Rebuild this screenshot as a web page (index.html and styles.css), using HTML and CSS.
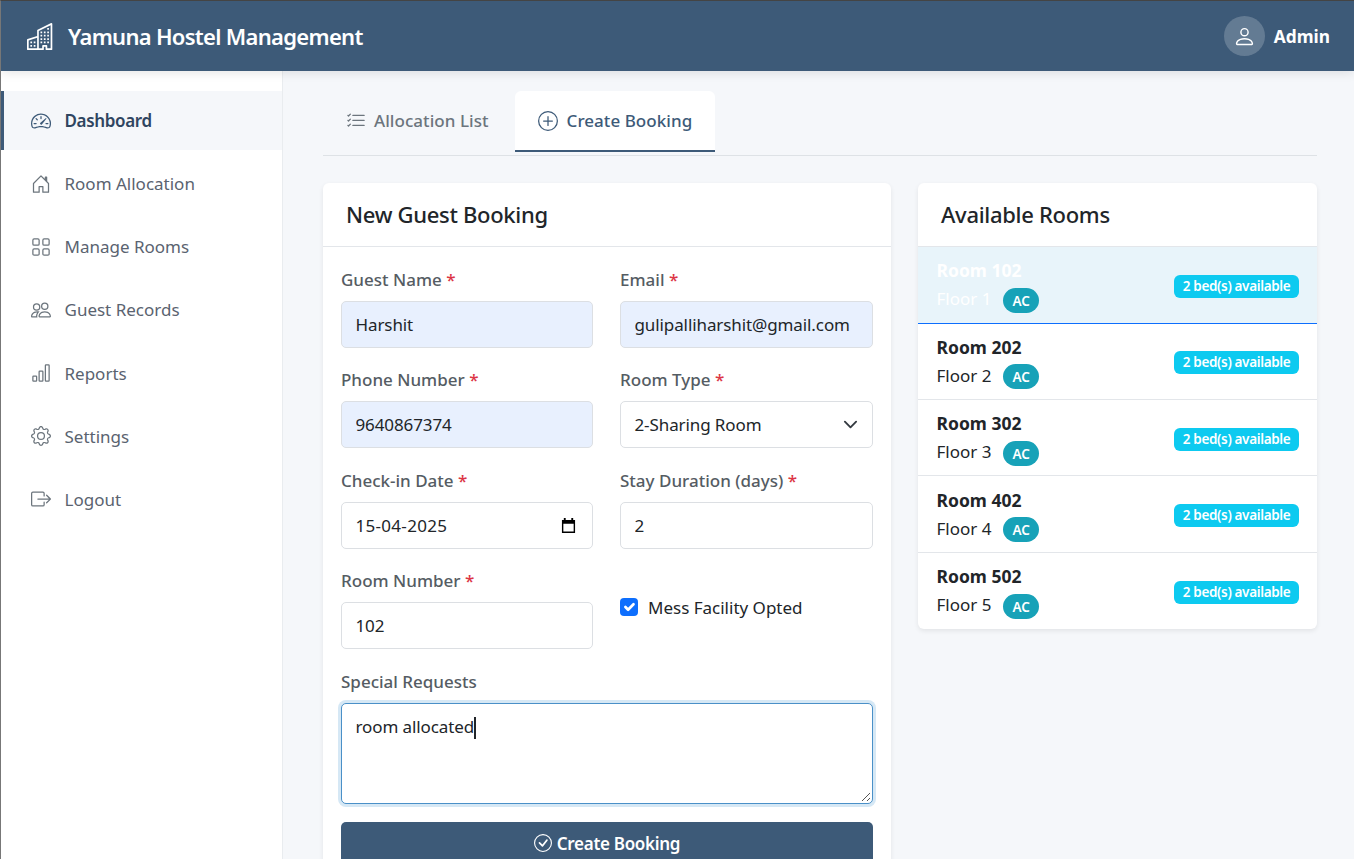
FILE: index.html
```html
<html>
<head>
    <title>Yamuna Hostel Management</title>
    <link rel="stylesheet" href="styles.css">
</head>
<body>
    <header class="topbar">
        <div class="brand">
            <svg class="brand-icon" viewBox="0 0 16 16" fill="currentColor"><path d="M14.763.075A.5.5 0 0 1 15 .5v15a.5.5 0 0 1-.5.5h-3a.5.5 0 0 1-.5-.5V14h-1v1.5a.5.5 0 0 1-.5.5h-9a.5.5 0 0 1-.5-.5V10a.5.5 0 0 1 .342-.474L6 7.64V4.5a.5.5 0 0 1 .276-.447l8-4a.5.5 0 0 1 .487.022zM6 8.694 1 10.36V15h5V8.694zM7 15h2v-1.5a.5.5 0 0 1 .5-.5h2a.5.5 0 0 1 .5.5V15h2V1.309l-7 3.5V15z"/><path d="M2 11h1v1H2v-1zm2 0h1v1H4v-1zm-2 2h1v1H2v-1zm2 0h1v1H4v-1zm4-4h1v1H8V9zm2 0h1v1h-1V9zm-2 2h1v1H8v-1zm2 0h1v1h-1v-1zm2-2h1v1h-1V9zm0 2h1v1h-1v-1zM8 7h1v1H8V7zm2 0h1v1h-1V7zm2 0h1v1h-1V7zM8 5h1v1H8V5zm2 0h1v1h-1V5zm2 0h1v1h-1V5zm0-2h1v1h-1V3z"/></svg>
            <span>Yamuna Hostel Management</span>
        </div>
        <div class="user">
            <div class="avatar">
                <svg viewBox="0 0 16 16" fill="currentColor"><path d="M8 8a3 3 0 1 0 0-6 3 3 0 0 0 0 6zm2-3a2 2 0 1 1-4 0 2 2 0 0 1 4 0zm4 8c0 1-1 1-1 1H3s-1 0-1-1 1-4 6-4 6 3 6 4zm-1-.004c-.001-.246-.154-.986-.832-1.664C11.516 10.68 10.289 10 8 10c-2.29 0-3.516.68-4.168 1.332-.678.678-.83 1.418-.832 1.664h10z"/></svg>
            </div>
            <span>Admin</span>
        </div>
    </header>

    <div class="layout">
        <nav class="sidebar">
            <a class="nav-item active">
                <svg viewBox="0 0 16 16" fill="currentColor"><path d="M8 4a.5.5 0 0 1 .5.5V6a.5.5 0 0 1-1 0V4.5A.5.5 0 0 1 8 4zM3.732 5.732a.5.5 0 0 1 .707 0l.915.914a.5.5 0 1 1-.708.708l-.914-.915a.5.5 0 0 1 0-.707zM2 10a.5.5 0 0 1 .5-.5h1.586a.5.5 0 0 1 0 1H2.5A.5.5 0 0 1 2 10zm9.5 0a.5.5 0 0 1 .5-.5h1.5a.5.5 0 0 1 0 1H12a.5.5 0 0 1-.5-.5zm.754-4.246a.389.389 0 0 0-.527-.02L7.547 9.31a.91.91 0 1 0 1.302 1.258l3.434-4.297a.389.389 0 0 0-.029-.518z"/><path fill-rule="evenodd" d="M0 10a8 8 0 1 1 15.547 2.661c-.442 1.253-1.845 1.602-2.932 1.25C11.309 13.488 9.475 13 8 13c-1.474 0-3.31.488-4.615.911-1.087.352-2.49.003-2.932-1.25A7.988 7.988 0 0 1 0 10zm8-7a7 7 0 0 0-6.603 9.329c.203.575.923.876 1.68.63C4.397 12.533 6.358 12 8 12s3.604.532 4.923.96c.757.245 1.477-.056 1.68-.631A7 7 0 0 0 8 3z"/></svg>
                <span>Dashboard</span>
            </a>
            <a class="nav-item">
                <svg viewBox="0 0 16 16" fill="currentColor"><path d="M8.354 1.146a.5.5 0 0 0-.708 0l-6 6A.5.5 0 0 0 1.5 7.5v7a.5.5 0 0 0 .5.5h4.5a.5.5 0 0 0 .5-.5v-4h2v4a.5.5 0 0 0 .5.5H14a.5.5 0 0 0 .5-.5v-7a.5.5 0 0 0-.146-.354L13 5.793V2.5a.5.5 0 0 0-.5-.5h-1a.5.5 0 0 0-.5.5v1.293L8.354 1.146zM2.5 14V7.707l5.5-5.5 5.5 5.5V14H10v-4a.5.5 0 0 0-.5-.5h-3a.5.5 0 0 0-.5.5v4H2.5z"/></svg>
                <span>Room Allocation</span>
            </a>
            <a class="nav-item">
                <svg viewBox="0 0 16 16" fill="currentColor"><path d="M1 2.5A1.5 1.5 0 0 1 2.5 1h3A1.5 1.5 0 0 1 7 2.5v3A1.5 1.5 0 0 1 5.5 7h-3A1.5 1.5 0 0 1 1 5.5v-3zM2.5 2a.5.5 0 0 0-.5.5v3a.5.5 0 0 0 .5.5h3a.5.5 0 0 0 .5-.5v-3a.5.5 0 0 0-.5-.5h-3zm6.5.5A1.5 1.5 0 0 1 10.5 1h3A1.5 1.5 0 0 1 15 2.5v3A1.5 1.5 0 0 1 13.5 7h-3A1.5 1.5 0 0 1 9 5.5v-3zm1.5-.5a.5.5 0 0 0-.5.5v3a.5.5 0 0 0 .5.5h3a.5.5 0 0 0 .5-.5v-3a.5.5 0 0 0-.5-.5h-3zM1 10.5A1.5 1.5 0 0 1 2.5 9h3A1.5 1.5 0 0 1 7 10.5v3A1.5 1.5 0 0 1 5.5 15h-3A1.5 1.5 0 0 1 1 13.5v-3zm1.5-.5a.5.5 0 0 0-.5.5v3a.5.5 0 0 0 .5.5h3a.5.5 0 0 0 .5-.5v-3a.5.5 0 0 0-.5-.5h-3zm6.5.5A1.5 1.5 0 0 1 10.5 9h3a1.5 1.5 0 0 1 1.5 1.5v3a1.5 1.5 0 0 1-1.5 1.5h-3A1.5 1.5 0 0 1 9 13.5v-3zm1.5-.5a.5.5 0 0 0-.5.5v3a.5.5 0 0 0 .5.5h3a.5.5 0 0 0 .5-.5v-3a.5.5 0 0 0-.5-.5h-3z"/></svg>
                <span>Manage Rooms</span>
            </a>
            <a class="nav-item">
                <svg viewBox="0 0 16 16" fill="currentColor"><path d="M15 14s1 0 1-1-1-4-5-4-5 3-5 4 1 1 1 1h8zm-7.978-1A.261.261 0 0 1 7 12.996c.001-.264.167-1.03.76-1.72C8.312 10.629 9.282 10 11 10c1.717 0 2.687.63 3.24 1.276.593.69.758 1.457.76 1.72l-.008.002a.274.274 0 0 1-.014.002H7.022zM11 7a2 2 0 1 0 0-4 2 2 0 0 0 0 4zm3-2a3 3 0 1 1-6 0 3 3 0 0 1 6 0zM6.936 9.28a5.88 5.88 0 0 0-1.23-.247A7.35 7.35 0 0 0 5 9c-4 0-5 3-5 4 0 .667.333 1 1 1h4.216A2.238 2.238 0 0 1 5 13c0-1.01.377-2.042 1.09-2.904.243-.294.526-.569.846-.816zM4.92 10A5.493 5.493 0 0 0 4 13H1c0-.26.164-1.03.76-1.724.545-.636 1.492-1.256 3.16-1.275zM1.5 5.5a3 3 0 1 1 6 0 3 3 0 0 1-6 0zm3-2a2 2 0 1 0 0 4 2 2 0 0 0 0-4z"/></svg>
                <span>Guest Records</span>
            </a>
            <a class="nav-item">
                <svg viewBox="0 0 16 16" fill="currentColor"><path d="M4 11H2v3h2v-3zm5-4H7v7h2V7zm5-5v12h-2V2h2zm-2-1a1 1 0 0 0-1 1v12a1 1 0 0 0 1 1h2a1 1 0 0 0 1-1V2a1 1 0 0 0-1-1h-2zM6 7a1 1 0 0 1 1-1h2a1 1 0 0 1 1 1v7a1 1 0 0 1-1 1H7a1 1 0 0 1-1-1V7zm-5 4a1 1 0 0 1 1-1h2a1 1 0 0 1 1 1v3a1 1 0 0 1-1 1H2a1 1 0 0 1-1-1v-3z"/></svg>
                <span>Reports</span>
            </a>
            <a class="nav-item">
                <svg viewBox="0 0 16 16" fill="currentColor"><path d="M8 4.754a3.246 3.246 0 1 0 0 6.492 3.246 3.246 0 0 0 0-6.492zM5.754 8a2.246 2.246 0 1 1 4.492 0 2.246 2.246 0 0 1-4.492 0z"/><path d="M9.796 1.343c-.527-1.79-3.065-1.79-3.592 0l-.094.319a.873.873 0 0 1-1.255.52l-.292-.16c-1.64-.892-3.433.902-2.54 2.541l.159.292a.873.873 0 0 1-.52 1.255l-.319.094c-1.79.527-1.79 3.065 0 3.592l.319.094a.873.873 0 0 1 .52 1.255l-.16.292c-.892 1.64.901 3.434 2.541 2.54l.292-.159a.873.873 0 0 1 1.255.52l.094.319c.527 1.79 3.065 1.79 3.592 0l.094-.319a.873.873 0 0 1 1.255-.52l.292.16c1.64.893 3.434-.902 2.54-2.541l-.159-.292a.873.873 0 0 1 .52-1.255l.319-.094c1.79-.527 1.79-3.065 0-3.592l-.319-.094a.873.873 0 0 1-.52-1.255l.16-.292c.893-1.64-.902-3.433-2.541-2.54l-.292.159a.873.873 0 0 1-1.255-.52l-.094-.319zm-2.633.283c.246-.835 1.428-.835 1.674 0l.094.319a1.873 1.873 0 0 0 2.693 1.115l.291-.16c.764-.415 1.6.42 1.184 1.185l-.159.292a1.873 1.873 0 0 0 1.116 2.692l.318.094c.835.246.835 1.428 0 1.674l-.319.094a1.873 1.873 0 0 0-1.115 2.693l.16.291c.415.764-.42 1.6-1.185 1.184l-.291-.159a1.873 1.873 0 0 0-2.693 1.116l-.094.318c-.246.835-1.428.835-1.674 0l-.094-.319a1.873 1.873 0 0 0-2.692-1.115l-.292.16c-.764.415-1.6-.42-1.184-1.185l.159-.291A1.873 1.873 0 0 0 1.945 8.93l-.319-.094c-.835-.246-.835-1.428 0-1.674l.319-.094A1.873 1.873 0 0 0 3.06 4.377l-.16-.292c-.415-.764.42-1.6 1.185-1.184l.292.159a1.873 1.873 0 0 0 2.692-1.115l.094-.319z"/></svg>
                <span>Settings</span>
            </a>
            <a class="nav-item">
                <svg viewBox="0 0 16 16" fill="currentColor"><path fill-rule="evenodd" d="M10 12.5a.5.5 0 0 1-.5.5h-8a.5.5 0 0 1-.5-.5v-9a.5.5 0 0 1 .5-.5h8a.5.5 0 0 1 .5.5v2a.5.5 0 0 0 1 0v-2A1.5 1.5 0 0 0 9.5 2h-8A1.5 1.5 0 0 0 0 3.5v9A1.5 1.5 0 0 0 1.5 14h8a1.5 1.5 0 0 0 1.5-1.5v-2a.5.5 0 0 0-1 0v2z"/><path fill-rule="evenodd" d="M15.854 8.354a.5.5 0 0 0 0-.708l-3-3a.5.5 0 0 0-.708.708L14.293 7.5H5.5a.5.5 0 0 0 0 1h8.793l-2.147 2.146a.5.5 0 0 0 .708.708l3-3z"/></svg>
                <span>Logout</span>
            </a>
        </nav>

        <main class="content">
            <div class="tabs">
                <a class="tab">
                    <svg viewBox="0 0 16 16" fill="currentColor"><path fill-rule="evenodd" d="M5 11.5a.5.5 0 0 1 .5-.5h9a.5.5 0 0 1 0 1h-9a.5.5 0 0 1-.5-.5zm0-4a.5.5 0 0 1 .5-.5h9a.5.5 0 0 1 0 1h-9a.5.5 0 0 1-.5-.5zm0-4a.5.5 0 0 1 .5-.5h9a.5.5 0 0 1 0 1h-9a.5.5 0 0 1-.5-.5zM3.854 2.146a.5.5 0 0 1 0 .708l-1.5 1.5a.5.5 0 0 1-.708 0l-.5-.5a.5.5 0 1 1 .708-.708L2 3.293l1.146-1.147a.5.5 0 0 1 .708 0zm0 4a.5.5 0 0 1 0 .708l-1.5 1.5a.5.5 0 0 1-.708 0l-.5-.5a.5.5 0 1 1 .708-.708L2 7.293l1.146-1.147a.5.5 0 0 1 .708 0zm0 4a.5.5 0 0 1 0 .708l-1.5 1.5a.5.5 0 0 1-.708 0l-.5-.5a.5.5 0 0 1 .708-.708l.146.147 1.146-1.147a.5.5 0 0 1 .708 0z"/></svg>
                    <span>Allocation List</span>
                </a>
                <a class="tab active">
                    <svg viewBox="0 0 16 16" fill="currentColor"><path d="M8 15A7 7 0 1 1 8 1a7 7 0 0 1 0 14zm0 1A8 8 0 1 0 8 0a8 8 0 0 0 0 16z"/><path d="M8 4a.5.5 0 0 1 .5.5v3h3a.5.5 0 0 1 0 1h-3v3a.5.5 0 0 1-1 0v-3h-3a.5.5 0 0 1 0-1h3v-3A.5.5 0 0 1 8 4z"/></svg>
                    <span>Create Booking</span>
                </a>
            </div>

            <div class="columns">
                <section class="card booking-card">
                    <h2 class="card-title">New Guest Booking</h2>
                    <form class="booking-form">
                        <div class="field">
                            <label>Guest Name <em>*</em></label>
                            <input class="control filled" type="text" value="Harshit">
                        </div>
                        <div class="field">
                            <label>Email <em>*</em></label>
                            <input class="control filled" type="text" value="gulipalliharshit@gmail.com">
                        </div>
                        <div class="field">
                            <label>Phone Number <em>*</em></label>
                            <input class="control filled" type="text" value="9640867374">
                        </div>
                        <div class="field">
                            <label>Room Type <em>*</em></label>
                            <div class="control select">
                                <span>2-Sharing Room</span>
                                <svg viewBox="0 0 16 16" fill="none" stroke="#343a40" stroke-linecap="round" stroke-linejoin="round" stroke-width="2"><path d="m2 5 6 6 6-6"/></svg>
                            </div>
                        </div>
                        <div class="field">
                            <label>Check-in Date <em>*</em></label>
                            <div class="control select date">
                                <span>15-04-2025</span>
                                <svg viewBox="0 0 16 16"><path fill="#000" d="M3 0h2v2h6V0h2v2h2v14H1V2h2V0zM2.5 6v8.5h11V6h-11z"/></svg>
                            </div>
                        </div>
                        <div class="field">
                            <label>Stay Duration (days) <em>*</em></label>
                            <input class="control" type="text" value="2">
                        </div>
                        <div class="field">
                            <label>Room Number <em>*</em></label>
                            <input class="control" type="text" value="102">
                        </div>
                        <div class="check-field">
                            <span class="checkbox">
                                <svg viewBox="0 0 20 20" fill="none" stroke="#fff" stroke-linecap="round" stroke-linejoin="round" stroke-width="3"><path d="m6 10 3 3 6-6"/></svg>
                            </span>
                            <span>Mess Facility Opted</span>
                        </div>
                        <div class="field wide">
                            <label>Special Requests</label>
                            <div class="control textarea">
                                <span>room allocated</span><i class="caret"></i>
                                <svg class="grip" viewBox="0 0 10 10" stroke="#555" stroke-width="1"><path d="M1 9 9 1M6 9l3-3"/></svg>
                            </div>
                        </div>
                        <button class="submit" type="button">
                            <svg viewBox="0 0 16 16" fill="currentColor"><path d="M8 15A7 7 0 1 1 8 1a7 7 0 0 1 0 14zm0 1A8 8 0 1 0 8 0a8 8 0 0 0 0 16z"/><path d="M10.97 4.97a.235.235 0 0 0-.02.022L7.477 9.417 5.384 7.323a.75.75 0 0 0-1.06 1.06L6.97 11.03a.75.75 0 0 0 1.079-.02l3.992-4.99a.75.75 0 0 0-1.071-1.05z"/></svg>
                            <span>Create Booking</span>
                        </button>
                    </form>
                </section>

                <section class="card rooms-card">
                    <h2 class="card-title">Available Rooms</h2>
                    <div class="room selected">
                        <div class="room-info">
                            <div class="room-name">Room 102</div>
                            <div class="room-floor">Floor 1 <span class="ac">AC</span></div>
                        </div>
                        <span class="beds">2 bed(s) available</span>
                    </div>
                    <div class="room">
                        <div class="room-info">
                            <div class="room-name">Room 202</div>
                            <div class="room-floor">Floor 2 <span class="ac">AC</span></div>
                        </div>
                        <span class="beds">2 bed(s) available</span>
                    </div>
                    <div class="room">
                        <div class="room-info">
                            <div class="room-name">Room 302</div>
                            <div class="room-floor">Floor 3 <span class="ac">AC</span></div>
                        </div>
                        <span class="beds">2 bed(s) available</span>
                    </div>
                    <div class="room">
                        <div class="room-info">
                            <div class="room-name">Room 402</div>
                            <div class="room-floor">Floor 4 <span class="ac">AC</span></div>
                        </div>
                        <span class="beds">2 bed(s) available</span>
                    </div>
                    <div class="room">
                        <div class="room-info">
                            <div class="room-name">Room 502</div>
                            <div class="room-floor">Floor 5 <span class="ac">AC</span></div>
                        </div>
                        <span class="beds">2 bed(s) available</span>
                    </div>
                </section>
            </div>
        </main>
    </div>
</body>
</html>
```

FILE: styles.css
```css
* {
    box-sizing: border-box;
}

html, body {
    height: 859px;
    overflow: hidden;
}

body {
    margin: 0;
    border-top: 1px solid #444;
    border-left: 1px solid #777;
    background-color: #f5f7fa;
    font-family: "Noto Sans", sans-serif;
    font-size: 17px;
    color: #212529;
}

.topbar {
    height: 70px;
    display: flex;
    align-items: center;
    justify-content: space-between;
    padding: 0 24px 0 26px;
    background-color: #3d5a78;
    color: white;
    box-shadow: 0 2px 10px rgba(0, 0, 0, 0.1);
    position: relative;
}

.brand {
    display: flex;
    align-items: center;
    gap: 14px;
    font-size: 22px;
    font-weight: 600;
    letter-spacing: -0.7px;
}

.brand-icon {
    width: 27px;
    height: 27px;
}

.user {
    display: flex;
    align-items: center;
    gap: 9px;
    font-size: 17.3px;
    font-weight: 700;
}

.avatar {
    width: 41px;
    height: 40px;
    border-radius: 50%;
    background-color: rgba(255, 255, 255, 0.2);
    display: flex;
    align-items: center;
    justify-content: center;
}

.avatar svg {
    width: 23px;
    height: 23px;
}

.layout {
    display: flex;
    height: 788px;
}

.sidebar {
    width: 282px;
    flex-shrink: 0;
    padding-top: 20px;
    background-color: white;
    border-right: 1px solid #e9ecef;
}

.nav-item {
    height: 59px;
    margin-bottom: 4.15px;
    display: flex;
    align-items: center;
    gap: 13.5px;
    padding-left: 30px;
    color: #5a6370;
}

.nav-item svg {
    width: 20px;
    height: 20px;
    flex-shrink: 0;
    color: #6c757d;
}

.nav-item.active {
    border-left: 3px solid #3d5a78;
    padding-left: 27px;
    background-color: #f5f7fa;
    color: #2f4560;
    font-weight: 600;
    letter-spacing: -0.35px;
}

.nav-item.active svg {
    color: #3d5a78;
}

.content {
    flex: 1;
    padding: 20px 37px 0 40px;
    min-width: 0;
}

.tabs {
    display: flex;
    height: 65px;
    padding-bottom: 3px;
    border-bottom: 1px solid #dee2e6;
    margin-bottom: 27px;
}

.tab {
    height: 61px;
    display: flex;
    align-items: center;
    gap: 9px;
    padding: 0 23px;
    border-bottom: 2px solid transparent;
    color: #6c757d;
    font-weight: 500;
    letter-spacing: 0.05px;
}

.tab:first-child {
    gap: 8px;
    padding-right: 26px;
}

.tab svg {
    width: 20px;
    height: 20px;
}

.tab.active {
    background-color: white;
    color: #3d5a78;
    border-bottom-color: #3d5a78;
    border-radius: 6px 6px 0 0;
}

.columns {
    display: flex;
    gap: 27px;
    align-items: flex-start;
}

.card {
    background-color: white;
    border-radius: 6px;
    box-shadow: 0 2px 5px rgba(0, 0, 0, 0.08);
}

.booking-card {
    width: 568px;
    flex-shrink: 0;
}

.rooms-card {
    width: 399px;
    flex-shrink: 0;
    overflow: hidden;
}

.card-title {
    height: 64px;
    margin: 0;
    padding: 0 0 2px 23px;
    display: flex;
    align-items: center;
    border-bottom: 1px solid #e3e6ea;
    font-size: 22px;
    font-weight: 500;
    letter-spacing: -0.3px;
}

.booking-form {
    display: grid;
    grid-template-columns: 252px 253px;
    column-gap: 27px;
    row-gap: 19.5px;
    padding: 19.75px 18px;
}

.field {
    display: flex;
    flex-direction: column;
    min-width: 0;
}

.field.wide, .submit {
    grid-column: 1 / 3;
}

.field label {
    height: 34px;
    color: #555c63;
    font-weight: 500;
    line-height: 25px;
}

.field em {
    color: #dc3545;
    font-style: normal;
}

.control {
    width: 100%;
    height: 47px;
    padding: 0 14px 0 13.5px;
    border: 1px solid #dcdfe3;
    border-radius: 5px;
    background-color: white;
    color: #212529;
    font-family: inherit;
    font-size: 17px;
    letter-spacing: -0.1px;
}

.control.filled {
    background-color: #e8f0fe;
}

.select {
    display: flex;
    align-items: center;
    justify-content: space-between;
}

.select svg {
    width: 15px;
    height: 15px;
}

.date {
    padding-right: 16px;
    letter-spacing: 0.3px;
}

.check-field {
    display: flex;
    align-items: center;
    gap: 10px;
    height: 47px;
    align-self: start;
    margin-top: 16px;
}

.checkbox {
    width: 18px;
    height: 18px;
    border-radius: 4px;
    background-color: #0d6efd;
    flex-shrink: 0;
    margin-top: -2px;
}

.checkbox svg {
    display: block;
}

.textarea {
    height: 101px;
    padding-top: 11px;
    border-color: #4a90c8;
    box-shadow: 0 0 0 3px #d6e8f5;
    position: relative;
}

.caret {
    display: inline-block;
    width: 2px;
    height: 22px;
    background-color: #212529;
    vertical-align: -6px;
}

.grip {
    position: absolute;
    right: 1px;
    bottom: 1px;
    width: 10px;
    height: 10px;
}

.submit {
    height: 42px;
    border: none;
    border-radius: 5px;
    background-color: #3d5a78;
    color: white;
    display: flex;
    align-items: center;
    justify-content: center;
    gap: 5px;
    font-family: inherit;
    font-size: 17px;
    font-weight: 600;
    letter-spacing: -0.3px;
    margin-top: -1px;
}

.submit svg {
    width: 18px;
    height: 18px;
}

.room {
    height: 76.4px;
    display: flex;
    align-items: center;
    justify-content: space-between;
    padding: 0 18px 0 18.5px;
    border-bottom: 1px solid #e3e6ea;
}

.room:last-child {
    border-bottom: none;
}

.room.selected {
    height: 76.6px;
    background-color: #e8f4fa;
    border-bottom-color: #0d6efd;
    color: white;
}

.room-info {
    padding-top: 3px;
}

.room-name {
    font-size: 17.5px;
    font-weight: 700;
    line-height: 24px;
}

.room-floor {
    line-height: 30px;
    margin-top: 2px;
    display: flex;
    align-items: center;
    gap: 12px;
}

.ac {
    background-color: #17a2b8;
    color: white;
    border-radius: 13px;
    font-size: 13.5px;
    font-weight: 600;
    padding: 0 9px;
    height: 25px;
    line-height: 26px;
    margin-top: 2px;
}

.beds {
    background-color: #0dcaf0;
    color: white;
    border-radius: 6px;
    font-size: 13.5px;
    font-weight: 600;
    letter-spacing: -0.35px;
    height: 23px;
    line-height: 23px;
    padding: 0 8.7px;
    margin-top: 3px;
}
```
